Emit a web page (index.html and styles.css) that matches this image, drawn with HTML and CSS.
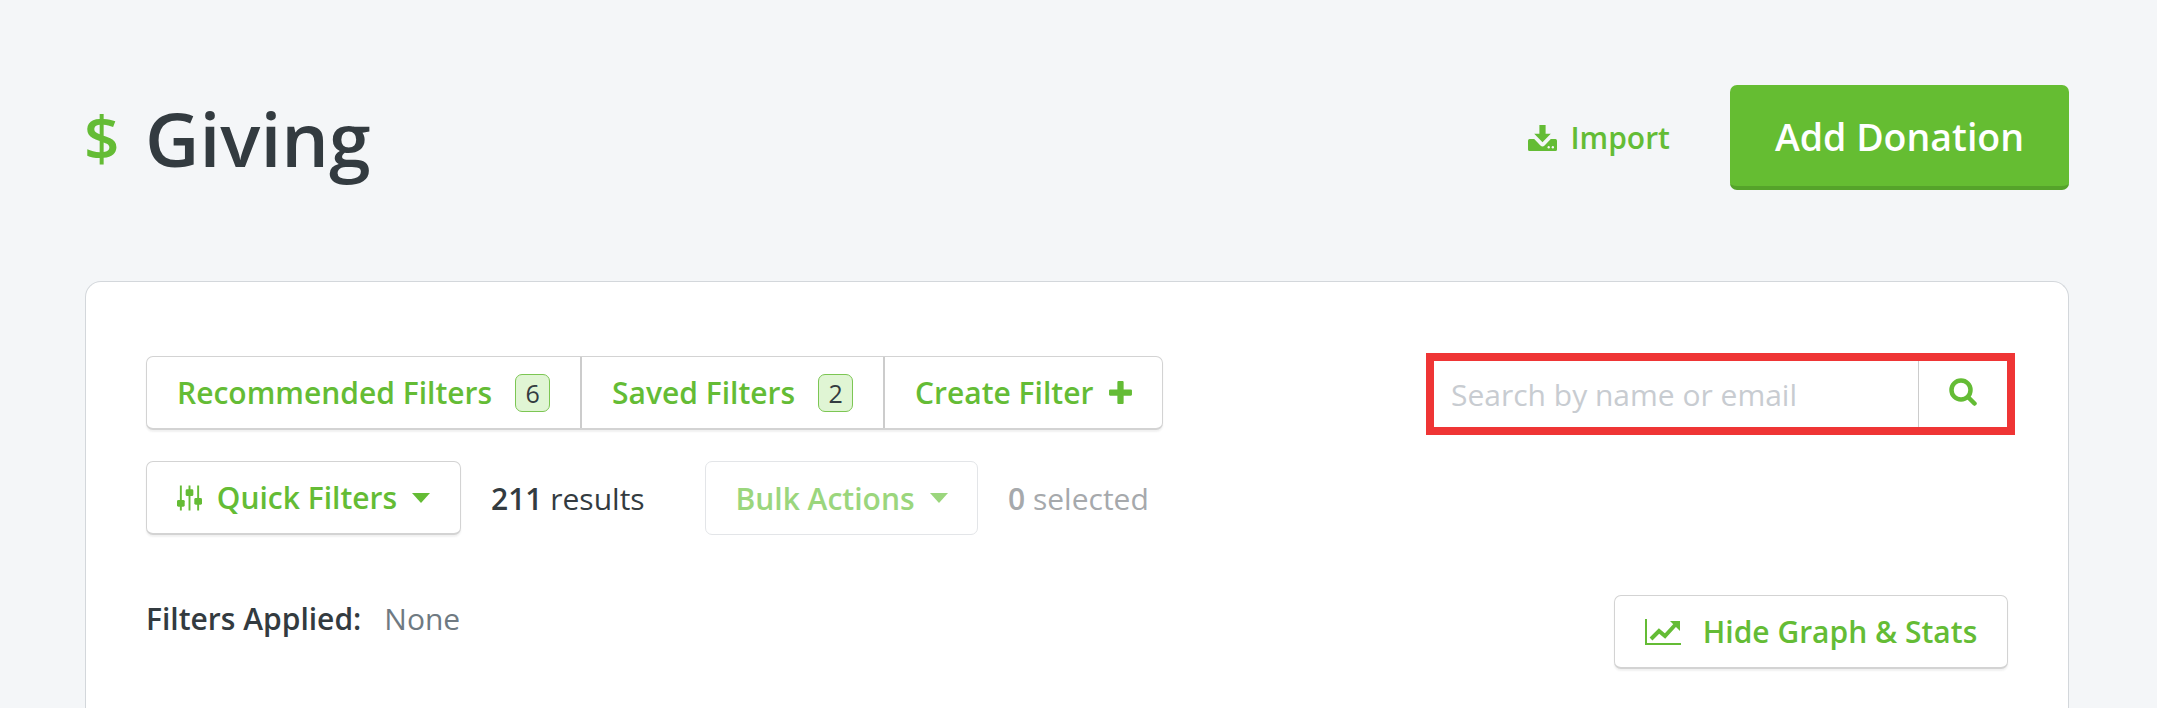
FILE: index.html
```html
<!DOCTYPE html>
<html lang="en">
<head>
  <meta charset="UTF-8" />
  <title>Giving</title>
  <link rel="stylesheet" href="styles.css">
</head>
<body>
  <div class="page-header">
    <h1 class="page-title"><span class="title-icon">$</span>Giving</h1>
    <div class="page-actions">
      <a class="import-link" href="#">
        <svg class="icon-import" viewBox="0 0 28 24" preserveAspectRatio="none"><path fill="currentColor" d="M11 0h6v8h5l-8 8-8-8h5z"/><path fill="currentColor" d="M1.500 13H6l6 6a3 3 0 0 0 4 0l6-6h4.500A1.500 1.500 0 0 1 28 14.500v8a1.500 1.500 0 0 1-1.500 1.500h-25A1.500 1.500 0 0 1 0 22.500v-8A1.500 1.500 0 0 1 1.500 13z"/><circle cx="20" cy="20.500" r="1.100" fill="#f4f6f8"/><circle cx="24" cy="20.500" r="1.100" fill="#f4f6f8"/></svg>
        Import
      </a>
      <button class="add-btn">Add Donation</button>
    </div>
  </div>

  <div class="card">
    <div class="toolbar">
      <div class="toolbar-left">
        <div class="filter-group">
          <a class="filter-tab tab-rec" href="#">Recommended Filters <span class="badge">6</span></a>
          <a class="filter-tab tab-saved" href="#">Saved Filters <span class="badge">2</span></a>
          <a class="filter-tab tab-create" href="#">Create Filter
            <svg class="icon-plus" viewBox="0 0 24 24"><path fill="currentColor" d="M9 2a1 1 0 0 1 1-1h4a1 1 0 0 1 1 1v7h7a1 1 0 0 1 1 1v4a1 1 0 0 1-1 1h-7v7a1 1 0 0 1-1 1h-4a1 1 0 0 1-1-1v-7H2a1 1 0 0 1-1-1v-4a1 1 0 0 1 1-1h7z"/></svg>
          </a>
        </div>
        <div class="action-row">
          <button class="btn quick-btn">
            <svg class="icon-sliders" viewBox="0 0 26 26"><g fill="currentColor"><rect x="3" y="0" width="2" height="26"/><rect x="12" y="0" width="2" height="26"/><rect x="21" y="0" width="2" height="26"/><rect x="0" y="15" width="8" height="7" rx="1.500"/><rect x="9" y="4" width="8" height="7" rx="1.500"/><rect x="18" y="13" width="8" height="7" rx="1.500"/></g></svg>
            Quick Filters <span class="caret"></span>
          </button>
          <span class="count results"><b>211</b> results</span>
          <button class="btn bulk-btn">Bulk Actions <span class="caret"></span></button>
          <span class="count selected"><b>0</b> selected</span>
        </div>
      </div>
      <div class="search-box">
        <input class="search-input" type="text" placeholder="Search by name or email" />
        <button class="search-btn">
          <svg class="icon-search" viewBox="0 0 28 28"><circle cx="12" cy="12" r="9.500" fill="none" stroke="currentColor" stroke-width="4.500"/><path d="M19 19L25.500 25.500" stroke="currentColor" stroke-width="4.500" stroke-linecap="round"/></svg>
        </button>
      </div>
    </div>

    <div class="applied-row">
      <div class="applied"><b>Filters Applied:</b><span class="applied-value">None</span></div>
      <button class="btn graph-btn">
        <svg class="icon-chart" viewBox="0 0 36 26"><path fill="currentColor" d="M0 0h2v24h34v2H0z"/><path fill="none" stroke="currentColor" stroke-width="4" d="M6 20l8-8 6 5 11-12"/><path fill="currentColor" d="M25 2h10v10z"/></svg>
        Hide Graph &amp; Stats
      </button>
    </div>
  </div>
</body>
</html>
```

FILE: styles.css
```css
* {
  box-sizing: border-box;
}

html, body {
  height: 708px;
  overflow: hidden;
}

body {
  margin: 0;
  padding: 85px 88px 0 85px;
  background-color: #f4f6f8;
  font-family: 'Open Sans', sans-serif;
  font-size: 30px;
  color: #333b40;
}

a {
  text-decoration: none;
}

button {
  font-family: inherit;
  cursor: pointer;
}

.page-header {
  display: flex;
  justify-content: space-between;
  align-items: center;
  height: 105px;
}

.page-title {
  display: flex;
  align-items: center;
  margin: 0;
  font-size: 75px;
  font-weight: 600;
  line-height: 100px;
  color: #333b40;
}

.title-icon {
  width: 60px;
  margin-top: -2px;
  margin-left: -1px;
  margin-right: 1px;
  font-size: 62px;
  font-weight: 600;
  color: #64bc35;
}

.page-actions {
  display: flex;
  align-items: center;
}

.import-link {
  display: flex;
  align-items: center;
  gap: 13px;
  margin-right: 60px;
  font-weight: 600;
  color: #64bc35;
}

.icon-import {
  width: 29px;
  height: 26px;
}

.add-btn {
  width: 339px;
  height: 105px;
  padding: 2px 0 0;
  border: none;
  border-bottom: 4px solid #55a32a;
  border-radius: 7px;
  background-color: #65bd32;
  color: #fff;
  font-size: 37.500px;
  font-weight: 600;
}

.card {
  margin-top: 91px;
  padding: 74px 60px 0;
  height: 427px;
  background-color: #fff;
  border: 1px solid #d3d7db;
  border-bottom: none;
  border-radius: 16px 16px 0 0;
}

.toolbar {
  display: flex;
  justify-content: space-between;
  align-items: flex-start;
}

.filter-group {
  display: inline-flex;
  height: 74px;
  background-color: #fff;
  border: 1px solid #d3d3d3;
  border-bottom-width: 2px;
  border-radius: 7px;
  box-shadow: 0 2px 2px rgba(0,0,0,0.06);
}

.filter-tab {
  display: flex;
  align-items: center;
  padding: 0 0 0 30px;
  border-left: 2px solid #ccc;
  font-weight: 600;
  color: #64bc35;
  white-space: nowrap;
}

.tab-rec {
  border-left: none;
  width: 433px;
}

.tab-saved {
  width: 303px;
}

.tab-create {
  width: 279px;
}

.badge {
  display: inline-flex;
  justify-content: center;
  align-items: center;
  width: 35px;
  height: 38px;
  margin-left: 23px;
  border: 1px solid #7cc653;
  border-radius: 7px;
  background-color: #e0f5d4;
  color: #333b40;
  font-size: 25px;
  font-weight: 400;
}

.icon-plus {
  width: 25px;
  height: 25px;
  margin-left: 15px;
}

.action-row {
  display: flex;
  align-items: center;
  margin-top: 31px;
}

.btn {
  display: flex;
  align-items: center;
  justify-content: center;
  height: 74px;
  padding: 0;
  background-color: #fff;
  border: 1px solid #d3d3d3;
  border-bottom-width: 2px;
  border-radius: 7px;
  box-shadow: 0 2px 2px rgba(0,0,0,0.06);
  color: #64bc35;
  font-size: 30px;
  font-weight: 600;
  white-space: nowrap;
}

.quick-btn {
  width: 315px;
}

.icon-sliders {
  width: 25px;
  height: 26px;
  margin-right: 15px;
}

.caret {
  display: inline-block;
  margin-left: 15px;
  border-left: 9px solid transparent;
  border-right: 9px solid transparent;
  border-top: 10px solid currentColor;
}

.count b {
  font-weight: 600;
}

.results {
  margin-left: 30px;
  width: 214px;
}

.bulk-btn {
  width: 273px;
  color: #9bd67d;
  border-color: #e3e5e8;
  border-bottom-width: 1px;
  box-shadow: none;
}

.selected {
  margin-left: 30px;
  color: #a6a9ac;
}

.search-box {
  display: flex;
  width: 589px;
  height: 82px;
  margin-top: -3px;
  margin-right: -7px;
  border: 8px solid #ef3535;
  background-color: #fff;
}

.search-input {
  flex: 1;
  min-width: 0;
  padding: 0 0 0 17px;
  border: none;
  outline: none;
  font-family: inherit;
  font-size: 30px;
}

.search-input::placeholder {
  color: #c8ccd1;
}

.search-btn {
  width: 89px;
  padding: 0;
  border: none;
  border-left: 1px solid #ccc;
  background-color: #fff;
  color: #64bc35;
}

.icon-search {
  width: 28px;
  height: 28px;
}

.applied-row {
  display: flex;
  justify-content: space-between;
  align-items: flex-start;
  margin-top: 60px;
}

.applied {
  margin-top: 3px;
}

.applied b {
  font-weight: 600;
}

.applied-value {
  margin-left: 23px;
  color: #6f7a82;
}

.graph-btn {
  width: 394px;
}

.icon-chart {
  width: 36px;
  height: 26px;
  margin-right: 22px;
}
```
